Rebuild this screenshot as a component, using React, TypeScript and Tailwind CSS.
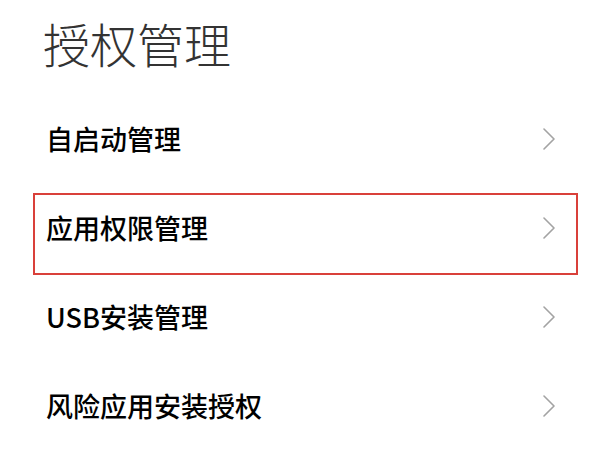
import React from "react";

const items = ["自启动管理", "应用权限管理", "USB安装管理", "风险应用安装授权"];

function Chevron() {
  return (
    <svg width="14" height="22" viewBox="0 0 14 22" fill="none">
      <path d="M2 1 L12 11 L2 21" stroke="#a3a3a3" strokeWidth="1.6" strokeLinecap="round" strokeLinejoin="round" />
    </svg>
  );
}

export default function App() {
  const font = { fontFamily: '"Noto Sans CJK SC", "Noto Sans", sans-serif' };
  return (
    <div className="relative w-[600px] h-[450px] bg-white overflow-hidden" style={font}>
      <div className="h-[94px] pl-[43px] pt-[10px]">
        <h1 className="text-[47px] leading-[66px] font-light text-[#333333]">授权管理</h1>
      </div>
      <div className="flex flex-col">
        {items.map((t) => (
          <div key={t} className="h-[89px] flex items-center justify-between pl-[46px] pr-[44px]">
            <span className="text-[27px] font-medium text-black leading-none">{t}</span>
            <Chevron />
          </div>
        ))}
      </div>
      <div className="absolute left-[33px] top-[193px] w-[545px] h-[82px] border-2 border-[#d9403a]" />
    </div>
  );
}
